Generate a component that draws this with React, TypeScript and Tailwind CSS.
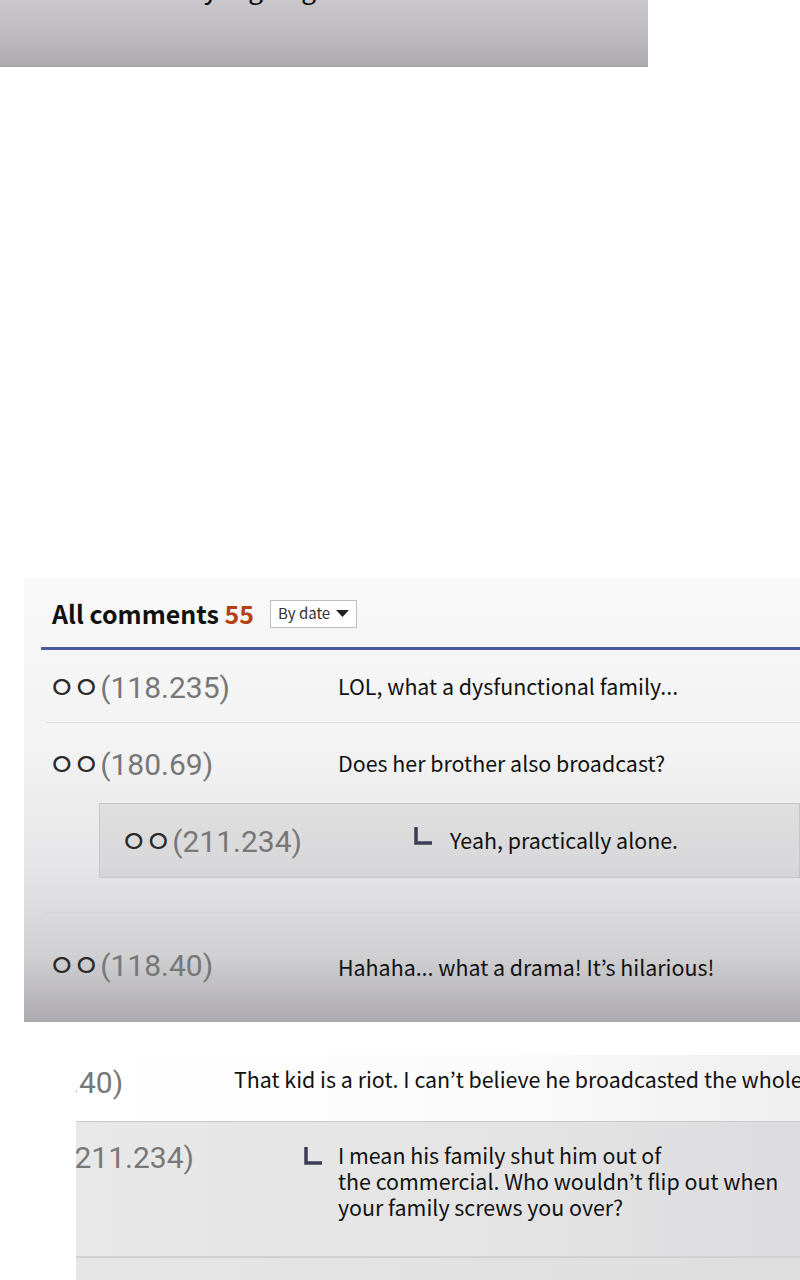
import React from 'react'

const sans = "font-['Noto_Sans_CJK_KR','Noto_Sans',sans-serif]"
const num = "font-['Roboto','Noto_Sans_CJK_KR',sans-serif]"

function Nick({ ip, className = '' }: { ip: string; className?: string }) {
  return (
    <span className={`shrink-0 whitespace-nowrap text-[30px] leading-none ${className}`}>
      <span className="font-['Noto_Sans_CJK_KR',sans-serif] text-[30px] tracking-[-3px] text-[#2a2a2a]">ㅇㅇ</span>
      <span className={`${num} ml-[3px] text-[#777777]`}>({ip})</span>
    </span>
  )
}

function ReplyMark() {
  return (
    <svg width="20" height="20" viewBox="0 0 20 20" className="shrink-0">
      <path d="M3 1V17H19" fill="none" stroke="#3d3c57" strokeWidth="3.5" />
    </svg>
  )
}

export default function App() {
  return (
    <div className="w-[800px] h-[1280px] overflow-hidden bg-white">
      {/* panel cut off at top */}
      <div className="w-[648px] h-[67px] overflow-hidden border-b border-[#a19ea4] bg-[linear-gradient(180deg,#c9c7cc_0%,#bebcc1_50%,#aca9af_100%)]">
        <p className={`${sans} -mt-[32px] pl-[11px] text-[26px] text-black whitespace-nowrap`}>The whole family is going home now</p>
      </div>

      <div className="h-[511px]" />

      {/* comments panel */}
      <div className={`ml-[24px] h-[444px] ${sans} bg-[linear-gradient(180deg,#f9f9f9_0%,#f2f2f2_40%,#e6e6e8_65%,#d0cfd2_85%,#acaaaf_100%)]`}>
        <div className="flex items-center h-[69px] pl-[28px] pt-[2px]">
          <h2 className="text-[25px] font-bold text-[#111]">
            All comments <span className="text-[#b3400f]">55</span>
          </h2>
          <div className="ml-[16px] flex items-center gap-[6px] h-[28px] px-[7px] border border-[#bdbdbd] bg-white text-[15px] text-[#333]">
            By date
            <svg width="13" height="7" viewBox="0 0 13 7"><path d="M0 0H13L6.5 7Z" fill="#222" /></svg>
          </div>
        </div>
        <div className="ml-[17px] h-[3px] bg-[#4a5c9c]" />

        <div className="ml-[22px] flex items-center h-[73px] border-b border-[#dedede]">
          <Nick ip="118.235" className="ml-[2px] w-[290px]" />
          <p className="text-[21.4px] text-[#111]">LOL, what a dysfunctional family...</p>
        </div>

        <div className="ml-[22px] flex items-center h-[80px]">
          <Nick ip="180.69" className="ml-[2px] w-[290px]" />
          <p className="text-[21.4px] text-[#111]">Does her brother also broadcast?</p>
        </div>

        <div className="ml-[75px] flex items-center h-[75px] border border-[#c6c6c6] bg-black/[0.06]">
          <Nick ip="211.234" className="ml-[20px] w-[293px]" />
          <div className="flex items-center gap-[17px] -mt-[8px]">
            <ReplyMark />
            <p className="text-[21.4px] text-[#111] mt-[8px]">Yeah, practically alone.</p>
          </div>
        </div>

        <div className="ml-[22px] h-[35px] border-b border-[#d2d2d4]" />

        <div className="ml-[22px] flex items-center h-[109px]">
          <Nick ip="118.40" className="ml-[2px] w-[290px] -mt-[6px]" />
          <p className="text-[21.4px] text-[#111]">Hahaha... what a drama! It’s hilarious!</p>
        </div>
      </div>

      <div className="h-[33px]" />

      {/* second panel, cropped */}
      <div className={`ml-[76px] overflow-hidden ${sans}`}>
        <div className="flex items-start h-[67px] pt-[8px] border-b border-[#c9c9c9] bg-[linear-gradient(90deg,#ffffff_0%,#fbfbfb_60%,#efeff0_100%)]">
          <Nick ip="118.40" className="-ml-[118px] w-[276px] pt-[2px]" />
          <p className="text-[21.4px] text-[#111] whitespace-nowrap">That kid is a riot. I can’t believe he broadcasted the whole thing</p>
        </div>
        <div className="flex items-start h-[136px] pt-[18px] border-b-2 border-[#d0d0d0] bg-[linear-gradient(90deg,#e8e8e8_0%,#e4e4e5_60%,#dcdcde_100%)]">
          <Nick ip="211.234" className="-ml-[64px] w-[291px]" />
          <div className="mt-[6px]">
            <ReplyMark />
          </div>
          <p className="ml-[15px] mt-[2px] text-[21.4px] leading-[26px] text-[#111]">
            I mean his family shut him out of
            <br />
            the commercial. Who wouldn’t flip out when
            <br />
            your family screws you over?
          </p>
        </div>
        <div className="h-[40px] bg-[linear-gradient(90deg,#e6e6e6_0%,#dededf_100%)]" />
      </div>
    </div>
  )
}
